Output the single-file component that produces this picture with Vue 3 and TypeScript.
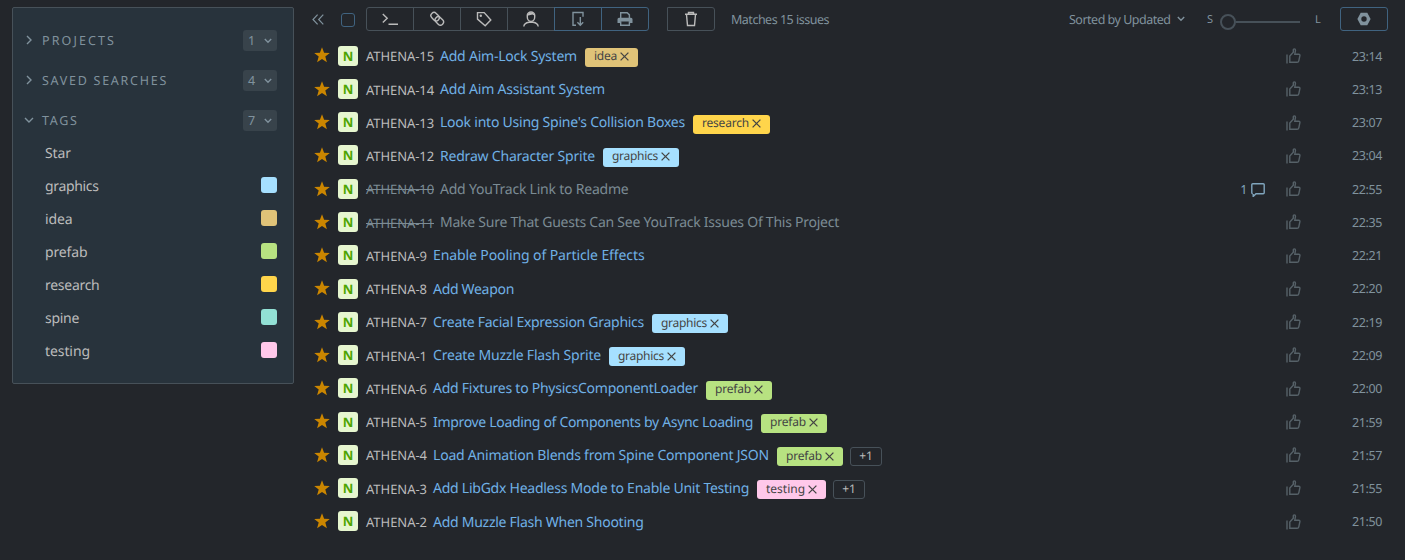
<script setup lang="ts">
import type { Directive } from 'vue'

interface Issue {
  id: string
  title: string
  width: number
  time: string
  tag?: string
  more?: number
  resolved?: boolean
  comments?: number
}

// Tracks a label so that it occupies the given width.
const vTrack: Directive<HTMLElement, number> = {
  mounted(el, { value }) {
    const natural = el.getBoundingClientRect().width
    const count = (el.textContent ?? '').length
    el.style.letterSpacing = `${(value - natural) / count}px`
  },
}

const sections = [
  { label: 'PROJECTS', width: 74, count: 1, open: false },
  { label: 'SAVED SEARCHES', width: 126, count: 4, open: false },
  { label: 'TAGS', width: 36.5, count: 7, open: true },
]

const colors: Record<string, string> = {
  graphics: '#a6e0ff',
  idea: '#e0c378',
  prefab: '#b7e281',
  research: '#ffd54b',
  spine: '#92e1d5',
  testing: '#ffc8ea',
}

const tags = [
  { name: 'Star', width: 26 },
  { name: 'graphics', width: 53.5 },
  { name: 'idea', width: 27.5 },
  { name: 'prefab', width: 42.5 },
  { name: 'research', width: 54.5 },
  { name: 'spine', width: 34 },
  { name: 'testing', width: 45 },
]

const tagWidths: Record<string, number> = { idea: 23, research: 47, graphics: 46, prefab: 36, testing: 39 }

const issues: Issue[] = [
  { id: 'ATHENA-15', title: 'Add Aim-Lock System', width: 137, time: '23:14', tag: 'idea' },
  { id: 'ATHENA-14', title: 'Add Aim Assistant System', width: 165, time: '23:13' },
  { id: 'ATHENA-13', title: "Look into Using Spine's Collision Boxes", width: 245, time: '23:07', tag: 'research' },
  { id: 'ATHENA-12', title: 'Redraw Character Sprite', width: 155, time: '23:04', tag: 'graphics' },
  { id: 'ATHENA-10', title: 'Add YouTrack Link to Readme', width: 188.5, time: '22:55', resolved: true, comments: 1 },
  { id: 'ATHENA-11', title: 'Make Sure That Guests Can See YouTrack Issues Of This Project', width: 399, time: '22:35', resolved: true },
  { id: 'ATHENA-9', title: 'Enable Pooling of Particle Effects', width: 211.5, time: '22:21' },
  { id: 'ATHENA-8', title: 'Add Weapon', width: 81, time: '22:20' },
  { id: 'ATHENA-7', title: 'Create Facial Expression Graphics', width: 211, time: '22:19', tag: 'graphics' },
  { id: 'ATHENA-1', title: 'Create Muzzle Flash Sprite', width: 168, time: '22:09', tag: 'graphics' },
  { id: 'ATHENA-6', title: 'Add Fixtures to PhysicsComponentLoader', width: 265, time: '22:00', tag: 'prefab' },
  { id: 'ATHENA-5', title: 'Improve Loading of Components by Async Loading', width: 320, time: '21:59', tag: 'prefab' },
  { id: 'ATHENA-4', title: 'Load Animation Blends from Spine Component JSON', width: 336, time: '21:57', tag: 'prefab', more: 1 },
  { id: 'ATHENA-3', title: 'Add LibGdx Headless Mode to Enable Unit Testing', width: 316, time: '21:55', tag: 'testing', more: 1 },
  { id: 'ATHENA-2', title: 'Add Muzzle Flash When Shooting', width: 210.5, time: '21:50' },
]
</script>

<template>
  <div class="page">
    <aside class="sidebar">
      <div v-for="s in sections" :key="s.label" class="section">
        <svg class="arrow" width="10" height="10" viewBox="0 0 10 10">
          <path :d="s.open ? 'M1 3l4 4 4-4' : 'M3 1l4 4-4 4'" />
        </svg>
        <span class="section-label"><span v-track="s.width">{{ s.label }}</span></span>
        <span class="pill">
          <span>{{ s.count }}</span>
          <svg width="8" height="6" viewBox="0 0 8 6"><path d="M.8 1L4 4.2 7.2 1" /></svg>
        </span>
      </div>
      <div v-for="t in tags" :key="t.name" class="tag-row">
        <span class="tag-label"><span v-track="t.width">{{ t.name }}</span></span>
        <i v-if="colors[t.name]" class="swatch" :style="{ background: colors[t.name] }"></i>
      </div>
    </aside>

    <main class="main">
      <header class="toolbar">
        <svg class="collapse" width="12" height="11" viewBox="0 0 12 11"><path d="M5.6.7L1 5.5l4.6 4.8M11.3.7L6.7 5.5l4.6 4.8" /></svg>
        <i class="checkbox"></i>
        <div class="group">
          <button class="btn">
            <svg width="16" height="14" viewBox="0 0 16 14"><path d="M.8 2l4.4 4.2L.8 10.4M6.5 12.2H16" /></svg>
          </button>
          <button class="btn">
            <svg width="16" height="16" viewBox="0 0 16 16">
              <g transform="rotate(45 8 8)">
                <rect x=".4" y="4.6" width="9.2" height="6.2" rx="3.1" />
                <rect x="6.4" y="4.6" width="9.2" height="6.2" rx="3.1" />
              </g>
            </svg>
          </button>
          <button class="btn">
            <svg width="16" height="16" viewBox="0 0 16 16">
              <path d="M1.5 1.6h6.7l6.6 7.4-5.6 5.7-7.7-6.6z" /><circle class="solid" cx="4.8" cy="4.8" r="1.2" />
            </svg>
          </button>
          <button class="btn">
            <svg width="16" height="16" viewBox="0 0 16 16">
              <path d="M4.3 4.3a3.7 3.3 0 0 1 7.4 0v1.6c0 2.3-1.6 4.5-3.7 4.5S4.3 8.2 4.3 5.9z" />
              <path class="solid" d="M4.3 4.8C4.5.3 11.5.3 11.7 4.8L9.5 3.5z" />
              <path d="M.8 15.5c.3-3.2 2.6-3.9 5.200-4.300h4c2.600.4 4.900 1.100 5.200 4.300" />
            </svg>
          </button>
          <button class="btn blue">
            <svg width="14" height="16" viewBox="0 0 14 16">
              <path d="M5 14.200H2V1.500h10v4.200M9.300 6v8M6.400 11.300l2.900 3 2.900-3" />
            </svg>
          </button>
          <button class="btn blue">
            <svg width="16" height="16" viewBox="0 0 16 16">
              <path d="M3.700 7V1.700h6.500l2.200 2.200V7" />
              <path class="solid" d="M2 6.700h12q1.500 0 1.500 1.500V12h-3v-1.600h-9V12h-3V8.200Q.5 6.700 2 6.700z" />
              <path d="M3.700 10.300v4h8.700v-4" />
            </svg>
          </button>
        </div>
        <button class="btn trash">
          <svg width="14" height="16" viewBox="0 0 14 16">
            <path d="M1 3.200h12M4.500 2.700V1.500h5v1.200M2.500 3.500l1 11h7l1-11" />
          </svg>
        </button>
        <span class="matches"><span v-track="98">Matches 15 issues</span></span>
        <span class="sorted"><span v-track="101.500">Sorted by Updated</span></span>
        <svg class="sort-arrow" width="8" height="6" viewBox="0 0 8 6"><path d="M.8 1L4 4.200 7.200 1" /></svg>
        <span class="size small">S</span>
        <span class="slider"><i class="knob"></i><i class="track"></i></span>
        <span class="size large">L</span>
        <button class="btn settings">
          <svg width="14" height="14" viewBox="0 0 14 14">
            <path fill-rule="evenodd" d="M3.700.8h6.600L13.600 7l-3.300 6.200H3.700L.4 7zM7 4.300a2.700 2.700 0 1 0 0 5.400 2.700 2.700 0 0 0 0-5.400z" />
          </svg>
        </button>
      </header>

      <div class="list">
        <div v-for="i in issues" :key="i.id" class="issue" :class="{ resolved: i.resolved }">
          <svg class="star" width="16" height="16" viewBox="0 0 16 16">
            <path d="M8 .3l2.100 5.400 5.700.300-4.500 3.600 1.600 5.700L8 12.100l-4.900 3.200 1.600-5.700L.2 6l5.700-.3z" />
          </svg>
          <span class="badge">N</span>
          <span class="id"><span v-track="i.id.length === 9 ? 68 : 61">{{ i.id }}</span></span>
          <a class="title"><span v-track="i.width">{{ i.title }}</span></a>
          <span v-if="i.tag" class="tag" :style="{ background: colors[i.tag] }">
            <span v-track="tagWidths[i.tag]">{{ i.tag }}</span>
            <svg width="9" height="9" viewBox="0 0 9 9"><path d="M.6.600l7.800 7.800M8.400.600L.6 8.400" /></svg>
          </span>
          <span v-if="i.more" class="more">+{{ i.more }}</span>
          <span class="space"></span>
          <span v-if="i.comments" class="comments">
            {{ i.comments }}
            <svg width="14" height="14" viewBox="0 0 14 14">
              <path d="M2.200 11V13.500L5 10.700h7.200q1 0 1-1V1.800q0-1-1-1H1.800q-1 0-1 1v7.900q0 1 1 1" />
            </svg>
          </span>
          <svg class="thumb" width="15" height="16" viewBox="0 0 15 16">
            <path d="M1 6.500V15.500M3.800 14.300V8L7.300 4.200V2Q7.300.9 8.300.9 9.500.9 9.500 2.200L8.800 6.200h3.900q1.500 0 1.200 1.500l-1.100 5.200q-.3 1.400-1.700 1.400z" />
          </svg>
          <span class="time"><span v-track="30">{{ i.time }}</span></span>
        </div>
      </div>
    </main>
  </div>
</template>

<style>
body {
  background: #23262b;
}
</style>

<style scoped>
.page {
  display: flex;
  align-items: flex-start;
  box-sizing: border-box;
  height: 560px;
  padding: 7px 17px 0 12px;
  overflow: hidden;
  background: #23262b;
  color: #bbb;
  font-family: 'Noto Sans', 'Open Sans', sans-serif;
  font-size: 14px;
  line-height: 20px;
  text-rendering: geometricPrecision;
}
svg {
  display: block;
  flex: none;
  fill: none;
  stroke: currentColor;
  stroke-width: 1.4;
}
span {
  white-space: pre;
}
.solid {
  fill: currentColor;
  stroke: none;
}
.sidebar {
  box-sizing: border-box;
  flex: none;
  width: 282px;
  height: 377px;
  padding: 12px 16px 0 11px;
  border: 1px solid #475159;
  border-radius: 2px;
  background: #28333c;
}
.section {
  display: flex;
  align-items: center;
  height: 40px;
  color: #80929d;
  font-size: 12.5px;
}
.arrow {
  margin-right: 8px;
}
.section-label {
  flex: 1;
  padding-top: 2px;
}
.pill {
  display: flex;
  align-items: center;
  justify-content: space-between;
  box-sizing: border-box;
  width: 34px;
  height: 21px;
  margin-top: 1px;
  padding: 0 5px 0 5px;
  border-radius: 3px;
  background: #38434b;
}
.pill svg {
  margin-top: 1px;
}
.tag-row {
  display: flex;
  align-items: center;
  justify-content: space-between;
  height: 33px;
  padding-left: 21px;
}
.section + .tag-row {
  margin-top: -3px;
}
.swatch {
  width: 16px;
  height: 16px;
  margin-bottom: 3px;
  border-radius: 3px;
}
.main {
  flex: 1;
  min-width: 0;
}
.toolbar {
  display: flex;
  align-items: center;
  height: 24px;
  padding-left: 18px;
  color: #80929d;
  font-size: 12.5px;
}
.collapse {
  stroke-width: 1.2;
}
.checkbox {
  box-sizing: border-box;
  width: 14px;
  height: 14px;
  margin: 2px 11px 0 17px;
  border: 1px solid #406380;
  border-radius: 3px;
}
.group {
  display: flex;
}
.btn {
  display: flex;
  align-items: center;
  justify-content: center;
  box-sizing: border-box;
  width: 48px;
  height: 24px;
  margin: 0;
  padding: 0;
  border: 1px solid #475159;
  background: none;
  color: #bbb;
}
.group .btn + .btn {
  margin-left: -1px;
}
.group .btn:first-child {
  border-radius: 3px 0 0 3px;
}
.group .btn:last-child {
  border-radius: 0 3px 3px 0;
}
.btn.blue {
  border-color: #406380;
  color: #80929d;
}
.btn.trash {
  margin-left: 18px;
  border-radius: 0 3px 3px 0;
}
.matches {
  flex: 1;
  margin-left: 16px;
  padding-top: 2px;
}
.sorted {
  width: 102px;
  padding-top: 2px;
}
.sort-arrow {
  margin-left: 6px;
}
.size {
  padding-top: 2px;
  font-size: 11px;
}
.size.small {
  width: 13px;
  margin-left: 22px;
}
.slider {
  display: flex;
  align-items: center;
  width: 80px;
  margin-top: 5px;
}
.knob {
  box-sizing: border-box;
  width: 16px;
  height: 16px;
  border: 2px solid #475159;
  border-radius: 50%;
}
.track {
  flex: 1;
  height: 2px;
  background: #475159;
}
.size.large {
  width: 25px;
  margin-left: 15px;
}
.btn.settings {
  border-color: #406380;
  border-radius: 3px;
  color: #80929d;
}
.settings svg {
  fill: currentColor;
  stroke: none;
}
.list {
  padding: 8.36px 6px 0 20px;
}
.issue {
  display: flex;
  align-items: center;
  height: 33.28px;
}
.star {
  margin-bottom: 1px;
  fill: #cb8600;
  stroke: none;
}
.badge {
  width: 20px;
  height: 20px;
  margin: 0 8px 0.6px;
  border-radius: 3px;
  background: #e6f6cf;
  color: #4da400;
  font-size: 13px;
  font-weight: 700;
  text-align: center;
}
.id {
  margin-right: 6px;
  padding-top: 0.6px;
  font-size: 13px;
}
.title {
  padding-top: 1.6px;
  color: #70b1e6;
}
.resolved .id,
.resolved .title {
  color: #7b8b94;
}
.resolved .id {
  text-decoration: line-through;
}
.tag {
  display: flex;
  align-items: center;
  height: 19px;
  margin: 3px 0 0 8px;
  padding: 0 9px;
  border-radius: 3px;
  color: #444;
  font-size: 12px;
  line-height: 16px;
}
.tag > span {
  padding-bottom: 2px;
}
.tag svg {
  margin: 0 0 1px 3px;
  stroke-width: 1.3;
}
.more {
  box-sizing: border-box;
  width: 32px;
  height: 19px;
  margin: 3px 0 0 7px;
  border: 1px solid #475159;
  border-radius: 3px;
  font-size: 12px;
  line-height: 15px;
  text-align: center;
}
.space {
  flex: 1;
}
.comments {
  display: flex;
  align-items: center;
  gap: 3px;
  margin-right: 21px;
  padding-top: 2px;
  color: #80a5bd;
  font-size: 12.5px;
  white-space: normal;
}
.thumb {
  margin-right: 1px;
  color: #566168;
}
.time {
  width: 30px;
  margin-left: 50.5px;
  padding-top: 1.2px;
  color: #80929d;
  font-size: 12.5px;
}
</style>
